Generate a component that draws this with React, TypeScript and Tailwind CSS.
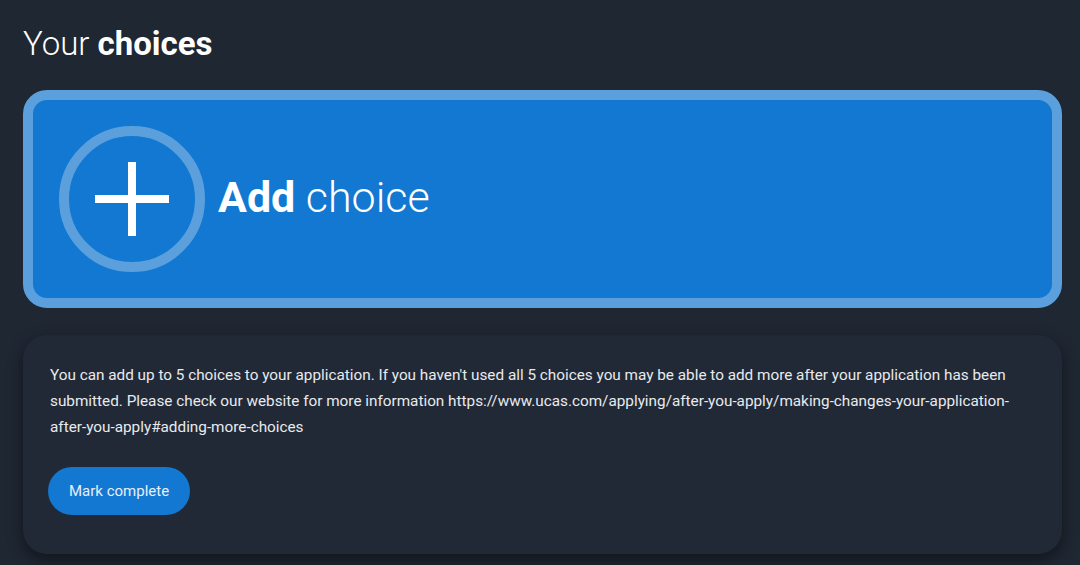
export default function App() {
  return (
    <div
      className="min-h-[565px] w-full bg-[#1f2733] text-white"
      style={{ fontFamily: 'Roboto, "Noto Sans", sans-serif' }}
    >
      <div className="px-[23px] pt-[24px] pb-[12px]">
        <h1 className="text-[33px] leading-[40px] font-light">
          Your <span className="font-bold">choices</span>
        </h1>

        <button className="mt-[26px] flex h-[218px] w-[1039px] items-center rounded-[24px] border-[10px] border-[#5ba0dd] bg-[#1278d1] pl-[26px] text-left">
          <div className="flex h-[146px] w-[146px] items-center justify-center rounded-full border-[10px] border-[#5ba0dd]">
            <svg width="74" height="74" viewBox="0 0 74 74">
              <rect x="33" y="0" width="8" height="74" fill="#fff" />
              <rect x="0" y="33" width="74" height="8" fill="#fff" />
            </svg>
          </div>
          <span className="ml-[13px] -mt-[4px] text-[43px] leading-none font-light">
            <span className="font-bold">Add</span> choice
          </span>
        </button>

        <div className="mt-[27px] w-[1039px] rounded-[24px] bg-[#212936] px-[27px] pt-[27px] pb-[39px] shadow-[0_6px_16px_rgba(0,0,0,0.45)]">
          <p className="text-[15.3px] leading-[26px] font-normal text-[#e8eaee]">
            You can add up to 5 choices to your application. If you haven't used all 5 choices you may be able to add more after your application has been submitted. Please check our website for more information https://www.ucas.com/applying/after-you-apply/making-changes-your-application-after-you-apply#adding-more-choices
          </p>
          <button className="mt-[27px] -ml-[2px] h-[48px] rounded-full bg-[#1278d1] px-[21px] text-[15px] text-[#e8eefa]">
            Mark complete
          </button>
        </div>
      </div>
    </div>
  );
}
